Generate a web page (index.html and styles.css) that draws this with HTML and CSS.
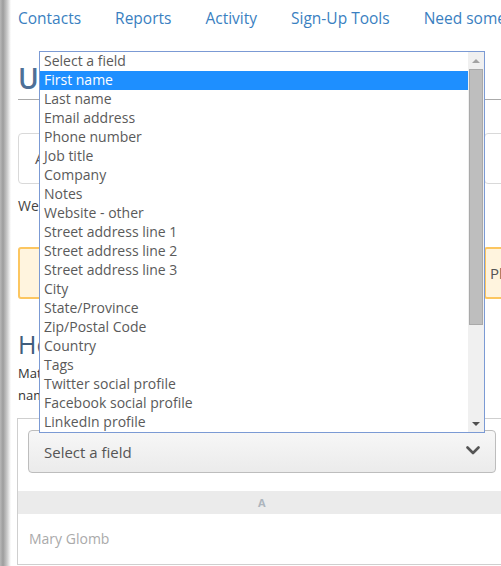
FILE: index.html
```html
<!DOCTYPE html>
<html lang="en">
<head>
    <meta charset="UTF-8">
    <meta name="viewport" content="width=device-width, initial-scale=1.0">
    <title>Upload Contacts</title>
    <link rel="stylesheet" href="styles.css">
</head>
<body>
    <div class="page">
        <nav class="topnav">
            <a href="#">Contacts</a>
            <a href="#">Reports</a>
            <a href="#">Activity</a>
            <a href="#">Sign-Up Tools</a>
            <a href="#">Need some help?</a>
        </nav>

        <main class="content">
            <h1 class="page-title">Upload contacts</h1>

            <div class="field-row">
                <div class="field-box">Add contacts from a file</div>
                <div class="field-box"></div>
            </div>

            <p class="hint">We found 12 contacts in your file.</p>

            <div class="field-row">
                <div class="notice">Review the columns below.</div>
                <div class="notice">Please</div>
            </div>

            <h2 class="section-title">Help us map your columns</h2>
            <p class="section-text">Match each column in your file to a field.<br>names that don't match will be skipped.</p>

            <div class="mapping">
                <div class="mapping-select">
                    <span>Select a field</span>
                    <svg class="chevron" width="14" height="9" viewBox="0 0 14 9">
                        <path d="M1.5 1.5 L7 7 L12.5 1.5" fill="none" stroke="#555" stroke-width="2.6" stroke-linecap="round" stroke-linejoin="round"/>
                    </svg>
                </div>
                <div class="mapping-head">A</div>
                <div class="mapping-row">Mary Glomb</div>
            </div>
        </main>

        <!-- open dropdown for the column mapping -->
        <div class="listbox">
            <ul class="options">
                <li>Select a field</li>
                <li class="active">First name</li>
                <li>Last name</li>
                <li>Email address</li>
                <li>Phone number</li>
                <li>Job title</li>
                <li>Company</li>
                <li>Notes</li>
                <li>Website - other</li>
                <li>Street address line 1</li>
                <li>Street address line 2</li>
                <li>Street address line 3</li>
                <li>City</li>
                <li>State/Province</li>
                <li>Zip/Postal Code</li>
                <li>Country</li>
                <li>Tags</li>
                <li>Twitter social profile</li>
                <li>Facebook social profile</li>
                <li>LinkedIn profile</li>
            </ul>
            <div class="scrollbar">
                <div class="scroll-btn"><span class="arrow-up"></span></div>
                <div class="scroll-thumb"></div>
                <div class="scroll-space"></div>
                <div class="scroll-btn"><span class="arrow-down"></span></div>
            </div>
        </div>
    </div>
</body>
</html>
```

FILE: styles.css
```css
:root {
    --link-color: #3a7fc1;
    --text-color: #444;
    --muted-color: #aaa;
    --border-color: #cfcfcf;
    --font: 'Open Sans', 'Noto Sans', sans-serif;
}

body {
    margin: 0;
    font-family: var(--font);
    color: var(--text-color);
    overflow: hidden;
    background: linear-gradient(to right, #b8b8b8 0, #9d9d9d 3px, #c9c9c9 7px, #f2f2f2 10px, #fff 11px);
}

.page {
    position: relative;
    width: 640px;
    height: 566px;
}

/* Top navigation */
.topnav {
    display: flex;
    gap: 34px;
    padding-left: 18px;
    height: 37px;
    line-height: 37px;
}

.topnav a {
    color: var(--link-color);
    text-decoration: none;
    font-size: 15.5px;
    white-space: nowrap;
}

.content {
    padding-left: 18px;
}

.page-title {
    margin: 24px 0 0;
    height: 34px;
    line-height: 34px;
    padding-bottom: 4px;
    border-bottom: 1px solid #aaa;
    font-size: 28px;
    font-weight: 600;
    color: #4e7097;
}

.field-row {
    display: grid;
    grid-template-columns: 452px 1fr;
    gap: 14px;
    margin-top: 33px;
}

.field-box {
    height: 49px;
    border: 1px solid #d9d9d9;
    border-radius: 4px;
    padding-left: 16px;
    line-height: 49px;
    font-size: 15px;
    color: #555;
}

.hint {
    margin: 12px 0 0;
    line-height: 20px;
    font-size: 14px;
    color: #444;
}

.hint + .field-row {
    margin-top: 31px;
}

.notice {
    height: 48px;
    border: 2px solid #fcc660;
    border-radius: 3px;
    background: #fff4de;
    padding-left: 4px;
    line-height: 48px;
    font-size: 15px;
    color: #555;
}

.notice:first-child {
    padding-left: 40px;
}

.section-title {
    margin: 29px 0 0;
    line-height: 32px;
    font-size: 25px;
    font-weight: 400;
    color: #3f5d7c;
}

.section-text {
    margin: 2px 0 0;
    line-height: 22px;
    font-size: 13px;
    color: #333;
}

/* Column mapping table */
.mapping {
    margin: 12px 0 0 -1px;
    border: 1px solid var(--border-color);
    border-bottom: none;
    padding-top: 11px;
}

.mapping-select {
    display: flex;
    align-items: center;
    justify-content: space-between;
    box-sizing: border-box;
    width: 468px;
    height: 43px;
    margin-left: 10px;
    padding: 0 15px 0 15px;
    border: 1px solid #bdbdbd;
    border-radius: 4px;
    background: linear-gradient(#f7f7f7, #ebebeb);
    font-size: 15px;
    color: #555;
}

.chevron {
    margin-top: -2px;
}

.mapping-head {
    margin-top: 18px;
    height: 23px;
    line-height: 23px;
    background: #ebebeb;
    padding-left: 240px;
    font-size: 11px;
    font-weight: 700;
    color: #adb5bd;
}

.mapping-row {
    height: 50px;
    line-height: 50px;
    padding-left: 11px;
    border-bottom: 1px solid var(--border-color);
    font-size: 14px;
    color: var(--muted-color);
}

/* Dropdown list overlay */
.listbox {
    position: absolute;
    left: 39px;
    top: 51px;
    width: 444px;
    height: 380px;
    display: flex;
    border: 1px solid #7b9ad4;
    background: #fff;
}

.options {
    flex: 1;
    margin: 0;
    padding: 0;
    list-style: none;
}

.options li {
    height: 19px;
    line-height: 18px;
    padding-left: 4px;
    font-size: 14px;
    color: #5a5a5a;
    white-space: nowrap;
}

.options li.active {
    background: #1e8fff;
    color: #fff;
}

.scrollbar {
    width: 16px;
    display: flex;
    flex-direction: column;
    background: #f0f0f0;
}

.scroll-btn {
    height: 17px;
    display: flex;
    align-items: center;
    justify-content: center;
}

.arrow-up {
    border-left: 4px solid transparent;
    border-right: 4px solid transparent;
    border-bottom: 4px solid #a3a3a3;
}

.arrow-down {
    border-left: 4px solid transparent;
    border-right: 4px solid transparent;
    border-top: 4px solid #505050;
}

.scroll-thumb {
    height: 254px;
    margin: 0 1px;
    background: #bebebe;
    border: 1px solid #a9a9a9;
}

.scroll-space {
    flex: 1;
}
```
